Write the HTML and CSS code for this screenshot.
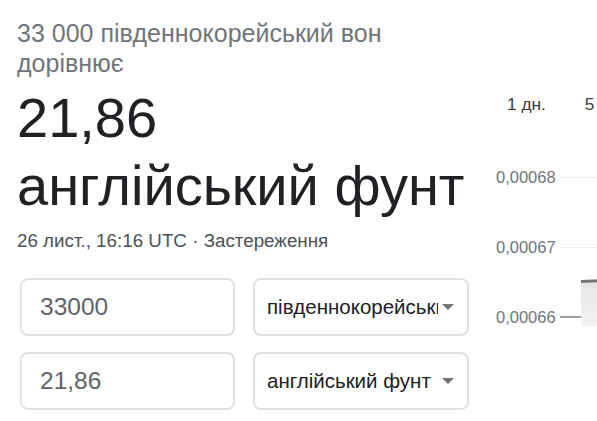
FILE: index.html
```html
<!DOCTYPE html>
<html>
  <head>
    <meta http-equiv="Content-Type" content="text/html; charset=utf-8" />
    <title>Конвертер валют</title>
    <link rel="stylesheet" href="styles.css">
  </head>

  <body>
    <div class="warp">
      <div class="result">
        <div class="from">33 000 південнокорейський вон дорівнює</div>
        <div class="to">21,86<br />англійський фунт</div>
        <div class="date">26 лист., 16:16 UTC · Застереження</div>

        <div class="form">
          <div class="row">
            <div class="field">33000</div>
            <div class="pick">
              <span class="pick-text">південнокорейський вон</span>
              <span class="arrow"></span>
            </div>
          </div>
          <div class="row">
            <div class="field">21,86</div>
            <div class="pick">
              <span class="pick-text">англійський фунт</span>
              <span class="arrow"></span>
            </div>
          </div>
        </div>
      </div>

      <div class="chart">
        <ul class="tabs">
          <li>1 дн.</li>
          <li>5 дн.</li>
        </ul>
        <div class="plot">
          <div class="grid">
            <span>0,00068</span><i></i>
          </div>
          <div class="grid">
            <span>0,00067</span><i></i>
          </div>
          <div class="grid base">
            <span>0,00066</span><i></i>
          </div>
          <!-- область графіка -->
          <svg class="area" width="20" height="50" viewBox="0 0 20 50">
            <defs>
              <linearGradient id="fill" x1="0" y1="0" x2="0" y2="1">
                <stop offset="0" stop-color="#e4e4e4" />
                <stop offset="1" stop-color="#f3f3f3" />
              </linearGradient>
            </defs>
            <rect x="0" y="2" width="20" height="46" fill="url(#fill)" />
            <path d="M0 3.5 L20 2.5" stroke="#757575" stroke-width="3" fill="none" />
          </svg>
        </div>
      </div>
    </div>
  </body>
</html>
```

FILE: styles.css
```css
* {
  margin: 0;
  padding: 0;
}
li {
  list-style: none;
}
body {
  font-family: "Liberation Sans", Arial, sans-serif;
  background: #fff;
  overflow: hidden;
}
.warp {
  display: flex;
  width: 597px;
  height: 421px;
  overflow: hidden;
}
.result {
  width: 473px;
  flex-shrink: 0;
  padding: 18px 0 0 17px;
}
.from {
  width: 420px;
  font-size: 25px;
  line-height: 30px;
  color: #70757a;
}
.to {
  margin-top: 6px;
  font-size: 56px;
  line-height: 68px;
  color: #202124;
}
.date {
  margin-top: 10px;
  font-size: 18.8px;
  line-height: 22px;
  color: #4d5156;
}
.form {
  display: flex;
  flex-direction: column;
  gap: 16px;
  margin: 26px 0 0 3px;
}
.row {
  display: flex;
  gap: 18px;
}
.field,
.pick {
  box-sizing: border-box;
  height: 58px;
  border: 2px solid #dfe1e5;
  border-radius: 8px;
  display: flex;
  align-items: center;
}
.field {
  width: 215px;
  padding-left: 18px;
  font-size: 24.5px;
  color: #5f6368;
}
.pick {
  width: 216px;
  padding: 0 13px 0 12px;
  font-size: 20.5px;
  color: #202124;
}
.pick-text {
  flex: 1;
  overflow: hidden;
  white-space: nowrap;
}
.arrow {
  width: 0;
  height: 0;
  border-left: 6px solid transparent;
  border-right: 6px solid transparent;
  border-top: 6px solid #757575;
  margin-left: 4px;
}
.chart {
  flex: 1;
  overflow: hidden;
}
.tabs {
  display: flex;
  gap: 39px;
  padding: 94px 0 0 17px;
  font-size: 17.3px;
  line-height: 20px;
  color: #3c4043;
  white-space: nowrap;
}
.plot {
  position: relative;
  margin-top: 28px;
}
.grid {
  display: flex;
  align-items: center;
  height: 70px;
}
.grid span {
  box-sizing: border-box;
  width: 70px;
  flex-shrink: 0;
  padding-left: 6px;
  font-size: 16.5px;
  color: #70757a;
}
.grid i {
  flex: 1;
  height: 1px;
  background: #ececec;
}
.base i {
  height: 2px;
  background: #9e9e9e;
}
.area {
  position: absolute;
  left: 91px;
  top: 136px;
}
```
